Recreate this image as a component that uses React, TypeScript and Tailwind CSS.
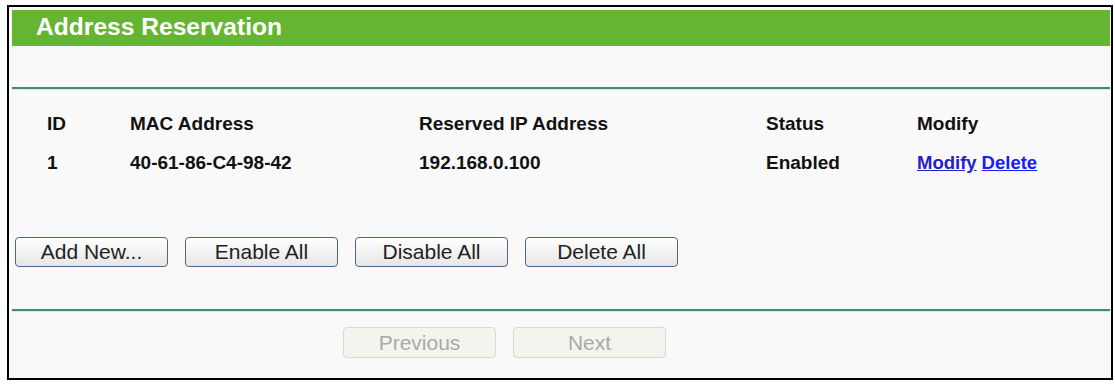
import React from 'react';

const rows = [
  { id: '1', mac: '40-61-86-C4-98-42', ip: '192.168.0.100', status: 'Enabled' },
];

const actionButtons = ['Add New...', 'Enable All', 'Disable All', 'Delete All'];

const cols = 'grid grid-cols-[83px_289px_347px_151px_1fr] items-center h-[39px] leading-[22px]';

const App = () => {
  return (
    <div
      className="h-[385px] w-[1115px] bg-white pt-[5px] pl-[7px]"
      style={{ fontFamily: '"Liberation Sans", Arial, sans-serif' }}
    >
      <div className="w-[1106px] h-[375px] border-2 border-black bg-[#f9f9f9] pt-[3px] pl-[3px] pr-[1px]">
        {/* title bar */}
        <div className="h-[36px] bg-[#66b532] pl-[24px] text-[24.6px] font-bold leading-[33px] text-white">
          Address Reservation
        </div>

        {/* separator */}
        <div className="mt-[41px] h-[2px] bg-[#478b68]" />
        <div className="h-px bg-[#d2eadb]" />

        {/* table */}
        <div className="pt-[14.6px] pl-[35px] text-[19px] font-bold text-[#111]">
          <div className={cols}>
            <div>ID</div>
            <div>MAC Address</div>
            <div>Reserved IP Address</div>
            <div>Status</div>
            <div>Modify</div>
          </div>
          {rows.map((r) => (
            <div key={r.id} className={cols}>
              <div>{r.id}</div>
              <div>{r.mac}</div>
              <div>{r.ip}</div>
              <div>{r.status}</div>
              <div className="flex gap-[5px] text-[18.5px]">
                <a href="#" className="text-[#2222c8] underline">Modify</a>
                <a href="#" className="text-[#1a1aff] underline">Delete</a>
              </div>
            </div>
          ))}
        </div>

        {/* action buttons */}
        <div className="mt-[54px] ml-[3px] flex gap-[17px]">
          {actionButtons.map((label) => (
            <button
              key={label}
              className="flex h-[30px] w-[153px] items-center justify-center rounded-[4px] border-[1.5px] border-[#4a6786] bg-linear-to-b from-white to-[#e6e6e6] text-[21px] leading-none text-[#222]"
            >
              {label}
            </button>
          ))}
        </div>

        {/* bottom separator */}
        <div className="mt-[42.5px] h-[2px] bg-[#478b68]" />
        <div className="h-px bg-[#d2eadb]" />

        {/* paging */}
        <div className="mt-[15px] ml-[331px] flex gap-[17px]">
          {['Previous', 'Next'].map((label) => (
            <button
              key={label}
              disabled
              className="flex h-[31px] w-[153px] items-center justify-center rounded-[4px] border-[1.5px] border-[#d9d9cf] bg-[#f4f4ef] text-[21px] leading-none text-[#a9a9a9]"
            >
              {label}
            </button>
          ))}
        </div>
      </div>
    </div>
  );
};

export default App;
